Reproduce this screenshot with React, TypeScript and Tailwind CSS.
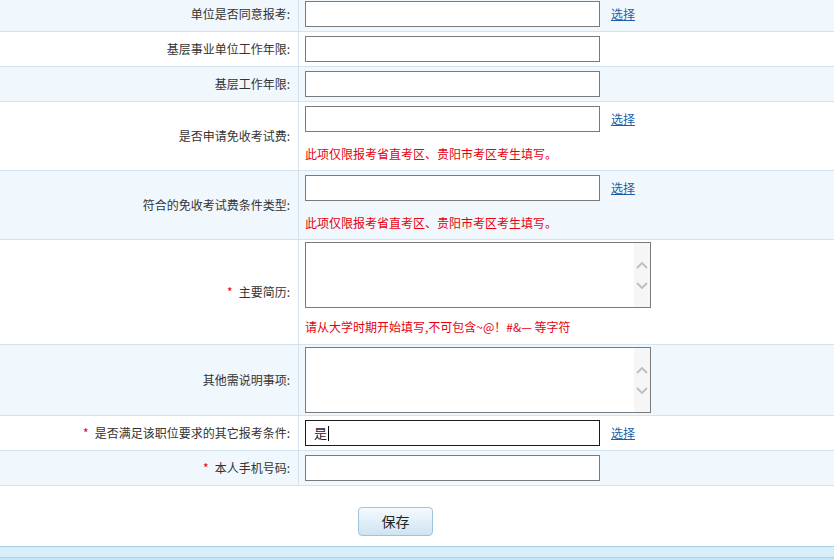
import type { ReactNode } from 'react';

const font = { fontFamily: '"Noto Sans CJK SC", "Liberation Sans", sans-serif' };

type RowProps = {
  label: string;
  required?: boolean;
  shaded?: boolean;
  children: ReactNode;
  contentClass?: string;
};

const Row = ({ label, required, shaded, children, contentClass }: RowProps) => (
  <div className={`flex border-b border-[#d2e3ef] ${shaded ? 'bg-[#f0f7fd]' : 'bg-white'}`}>
    <div className="w-[299px] shrink-0 flex items-center justify-end pr-[8px] border-r border-[#d2e3ef] text-[12px] text-[#333]">
      {required && <span className="text-[#e60012] mr-[6px]">*</span>}
      <span>{label}:</span>
    </div>
    <div className={`flex-1 pl-[6px] ${contentClass ?? 'py-[4px]'}`}>{children}</div>
  </div>
);

const TextInput = () => (
  <input type="text" className="block w-[295px] h-[26px] border border-[#7a7a7a] bg-white px-1 outline-none" />
);

const Pick = () => (
  <a href="#" className="text-[12px] text-[#1a5fa8] underline">选择</a>
);

const Note = ({ children, className }: { children: ReactNode; className: string }) => (
  <div className={`text-[12px] leading-[18px] text-[#e8000f] ${className}`}>{children}</div>
);

const Chevron = ({ up }: { up?: boolean }) => (
  <svg width="12" height="8" viewBox="0 0 12 8" fill="none">
    <path d={up ? 'M1 7 L6 2 L11 7' : 'M1 1 L6 6 L11 1'} stroke="#bdbdbd" strokeWidth="1.8" />
  </svg>
);

const Memo = () => (
  <div className="flex w-[346px] h-[66px] border border-[#7a7a7a] bg-white">
    <textarea className="flex-1 resize-none outline-none px-1 bg-white" />
    <div className="w-[16px] bg-[#f6f6f6] flex flex-col items-center justify-center gap-[13px]">
      <Chevron up />
      <Chevron />
    </div>
  </div>
);

export default function App() {
  return (
    <div className="w-[834px] h-[560px] overflow-hidden bg-white" style={font}>
      <div className="-mt-[3px]">
        <Row label="单位是否同意报考" shaded>
          <div className="flex items-center gap-[11px]">
            <TextInput />
            <Pick />
          </div>
        </Row>
        <Row label="基层事业单位工作年限">
          <TextInput />
        </Row>
        <Row label="基层工作年限" shaded>
          <TextInput />
        </Row>
        <Row label="是否申请免收考试费" contentClass="pt-[4px] pb-[7px]">
          <div className="flex items-center gap-[11px]">
            <TextInput />
            <Pick />
          </div>
          <Note className="mt-[13px]">此项仅限报考省直考区、贵阳市考区考生填写。</Note>
        </Row>
        <Row label="符合的免收考试费条件类型" shaded contentClass="pt-[4px] pb-[7px]">
          <div className="flex items-center gap-[11px]">
            <TextInput />
            <Pick />
          </div>
          <Note className="mt-[13px]">此项仅限报考省直考区、贵阳市考区考生填写。</Note>
        </Row>
        <Row label="主要简历" required contentClass="pt-[2px] pb-[8px]">
          <Memo />
          <Note className="mt-[10px]">请从大学时期开始填写,不可包含~@！#&amp;— 等字符</Note>
        </Row>
        <Row label="其他需说明事项" shaded contentClass="py-[2px]">
          <Memo />
        </Row>
        <Row label="是否满足该职位要求的其它报考条件" required>
          <div className="flex items-center gap-[11px]">
            <div className="w-[295px] h-[26px] border border-[#1a1a1a] bg-white flex items-center pl-[8px] text-[13px] text-[#222]">
              是<span className="inline-block w-px h-[15px] bg-black ml-px" />
            </div>
            <Pick />
          </div>
        </Row>
        <Row label="本人手机号码" required shaded>
          <TextInput />
        </Row>
      </div>
      <div className="h-[60px] pt-[21px] pl-[358px]">
        <button className="w-[75px] h-[29px] rounded-[4px] border border-[#9fc3da] bg-gradient-to-b from-[#f5fafe] to-[#cfe3f2] text-[14px] text-[#222]">
          保存
        </button>
      </div>
      <div className="h-[11px] border-t border-[#a8cfe1] bg-[#d9eefb]" />
      <div className="h-[3px] border-t border-[#9fd6ee] bg-[#c3e7f8]" />
    </div>
  );
}
